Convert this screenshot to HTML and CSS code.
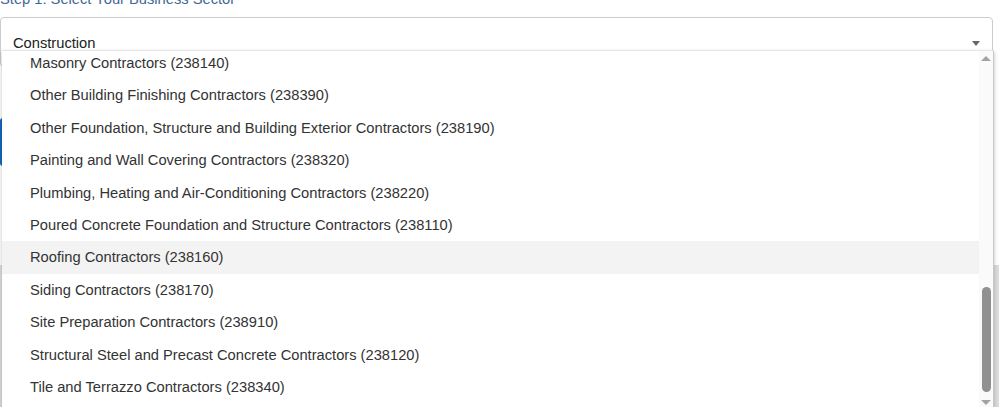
FILE: index.html
```html
<!DOCTYPE html>
<html>
<head>
<meta charset="utf-8">
<link rel="stylesheet" href="styles.css">
</head>
<body>
<div class="page">
  <label class="step-label">Step 1: Select Your Business Sector</label>
  <div class="select-wrap">
    <div class="select-box">
      <span class="select-value">Construction</span>
      <span class="caret"></span>
    </div>
    <div class="dropdown">
      <div class="list-view">
        <ul class="options">
          <li>Masonry Contractors (238140)</li>
          <li>Other Building Finishing Contractors (238390)</li>
          <li>Other Foundation, Structure and Building Exterior Contractors (238190)</li>
          <li>Painting and Wall Covering Contractors (238320)</li>
          <li>Plumbing, Heating and Air-Conditioning Contractors (238220)</li>
          <li>Poured Concrete Foundation and Structure Contractors (238110)</li>
          <li class="active">Roofing Contractors (238160)</li>
          <li>Siding Contractors (238170)</li>
          <li>Site Preparation Contractors (238910)</li>
          <li>Structural Steel and Precast Concrete Contractors (238120)</li>
          <li>Tile and Terrazzo Contractors (238340)</li>
        </ul>
      </div>
      <div class="scrollbar">
        <div class="sb-btn"><span class="arrow-up"></span></div>
        <div class="sb-track"><div class="sb-thumb"></div></div>
        <div class="sb-btn"><span class="arrow-down"></span></div>
      </div>
    </div>
  </div>
  <div class="behind-button"></div>
  <div class="behind-panel"></div>
</div>
</body>
</html>
```

FILE: styles.css
```css
* { box-sizing: border-box; }
html, body {
  margin: 0;
  padding: 0;
  background: #fff;
  overflow: hidden;
}
body {
  font-family: "Liberation Sans", Arial, sans-serif;
  font-size: 14.7px;
  color: #333;
  width: 999px;
  height: 407px;
}
.page {
  display: flex;
  flex-direction: column;
  padding-right: 6px;
}
.step-label {
  display: block;
  font-size: 14.7px;
  line-height: 20px;
  height: 20px;
  margin-top: -11px;
  margin-bottom: 8px;
  color: #3d6a94;
}
.select-wrap {
  position: relative;
  width: 993px;
  z-index: 2;
}
.select-box {
  height: 50px;
  border: 1px solid #ccc;
  border-radius: 4px;
  background: #fff;
  display: flex;
  align-items: center;
  justify-content: space-between;
  padding: 2px 12px 0 12px;
}
.select-value {
  color: #222;
  line-height: 20px;
}
.caret {
  width: 0;
  height: 0;
  border-left: 4px solid transparent;
  border-right: 4px solid transparent;
  border-top: 5px solid #666;
  margin-top: 1px;
}
.dropdown {
  position: absolute;
  top: 33px;
  left: 2px;
  right: -1px;
  height: 360px;
  background: #fff;
  border-top: 1px solid #e6e6e6;
  border-right: 1px solid #c8c8c8;
  box-shadow: 0 2px 4px rgba(0, 0, 0, 0.25);
  display: flex;
}
.list-view {
  flex: 1;
  overflow: hidden;
}
.options {
  list-style: none;
  margin: -4px 0 0 0;
  padding: 0;
}
.options li {
  height: 32.4px;
  line-height: 32.4px;
  padding-left: 28px;
  white-space: nowrap;
  color: #333;
}
.options li.active {
  background: #f3f3f3;
}
.scrollbar {
  width: 14px;
  flex: none;
  background: #fafafa;
  display: flex;
  flex-direction: column;
}
.sb-btn {
  height: 15px;
  display: flex;
  align-items: center;
  justify-content: center;
  flex: none;
}
.arrow-up {
  width: 0;
  height: 0;
  border-left: 5px solid transparent;
  border-right: 5px solid transparent;
  border-bottom: 5px solid #a3a3a3;
}
.arrow-down {
  width: 0;
  height: 0;
  border-left: 5px solid transparent;
  border-right: 5px solid transparent;
  border-top: 5px solid #a3a3a3;
}
.sb-track {
  flex: 1;
  display: flex;
  flex-direction: column;
  align-items: center;
}
.sb-thumb {
  margin-top: 221px;
  width: 9px;
  height: 105px;
  border-radius: 5px;
  background: #909090;
}
.behind-button {
  margin-top: 51px;
  width: 120px;
  height: 48px;
  background: #1565c0;
  border-radius: 3px;
  flex: none;
}
.behind-panel {
  margin-top: 99px;
  margin-right: -6px;
  height: 200px;
  background: #dcdcdc;
  flex: none;
}
```
